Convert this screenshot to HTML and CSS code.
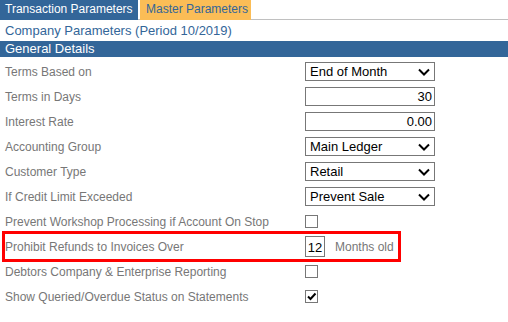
FILE: index.html
```html
<!DOCTYPE html>
<html lang="en">
<head>
    <meta charset="UTF-8">
    <title>Company Parameters</title>
    <link rel="stylesheet" href="styles.css">
</head>
<body>

<div class="tabs">
    <div class="tab">Transaction Parameters</div>
    <div class="tab active">Master Parameters</div>
</div>

<div class="title">Company Parameters (Period 10/2019)</div>
<div class="section">General Details</div>

<div class="form">
    <div class="row">
        <div class="label">Terms Based on</div>
        <div class="select">End of Month
            <svg class="chev" width="12" height="8" viewBox="0 0 12 8"><path d="M1 1.5 L6 6.5 L11 1.5" fill="none" stroke="#000" stroke-width="2"/></svg>
        </div>
    </div>
    <div class="row">
        <div class="label">Terms in Days</div>
        <div class="input">30</div>
    </div>
    <div class="row">
        <div class="label">Interest Rate</div>
        <div class="input">0.00</div>
    </div>
    <div class="row">
        <div class="label">Accounting Group</div>
        <div class="select">Main Ledger
            <svg class="chev" width="12" height="8" viewBox="0 0 12 8"><path d="M1 1.5 L6 6.5 L11 1.5" fill="none" stroke="#000" stroke-width="2"/></svg>
        </div>
    </div>
    <div class="row">
        <div class="label">Customer Type</div>
        <div class="select">Retail
            <svg class="chev" width="12" height="8" viewBox="0 0 12 8"><path d="M1 1.5 L6 6.5 L11 1.5" fill="none" stroke="#000" stroke-width="2"/></svg>
        </div>
    </div>
    <div class="row">
        <div class="label">If Credit Limit Exceeded</div>
        <div class="select">Prevent Sale
            <svg class="chev" width="12" height="8" viewBox="0 0 12 8"><path d="M1 1.5 L6 6.5 L11 1.5" fill="none" stroke="#000" stroke-width="2"/></svg>
        </div>
    </div>
    <div class="row">
        <div class="label">Prevent Workshop Processing if Account On Stop</div>
        <div class="check"></div>
    </div>
    <div class="row highlight">
        <div class="label">Prohibit Refunds to Invoices Over</div>
        <div class="small-input">12</div>
        <div class="unit">Months old</div>
    </div>
    <div class="row">
        <div class="label">Debtors Company &amp; Enterprise Reporting</div>
        <div class="check"></div>
    </div>
    <div class="row">
        <div class="label">Show Queried/Overdue Status on Statements</div>
        <div class="check">
            <svg width="11" height="11" viewBox="0 0 11 11"><path d="M2 5.5 L4.5 8 L9.5 2.5" fill="none" stroke="#000" stroke-width="2"/></svg>
        </div>
    </div>
</div>

</body>
</html>
```

FILE: styles.css
```css
body {
    font-family: "Liberation Sans", Arial, sans-serif;
    font-size: 12px;
    background-color: #fff;
    margin: 0;
    padding: 0;
}
.tabs {
    display: flex;
    height: 19px;
    border-bottom: 1px solid #c0c0c0;
}
.tab {
    background-color: #336699;
    color: #fff;
    height: 20px;
    line-height: 19px;
    padding: 0 5px;
    width: 138px;
    box-sizing: border-box;
    white-space: nowrap;
    margin-right: 2px;
}
.tab.active {
    background-color: #fbbd56;
    color: #336699;
    width: 111px;
    padding: 0 6px;
}
.title {
    color: #336699;
    font-size: 13px;
    line-height: 21px;
    padding-left: 5px;
}
.section {
    background-color: #336699;
    color: #fff;
    font-size: 13px;
    line-height: 16px;
    padding-left: 5px;
    margin-bottom: 2px;
}
.row {
    display: flex;
    align-items: center;
    height: 25px;
}
.label {
    width: 305px;
    padding-left: 5px;
    box-sizing: border-box;
    color: #777;
}
.select, .input {
    position: relative;
    width: 130px;
    height: 19px;
    line-height: 17px;
    border: 1px solid #777;
    box-sizing: border-box;
    padding: 0 4px;
    color: #000;
    font-size: 13px;
}
.input {
    text-align: right;
    padding-right: 2px;
}
.chev {
    position: absolute;
    right: 4px;
    top: 5px;
}
.check {
    width: 13px;
    height: 13px;
    border: 1px solid #777;
    box-sizing: border-box;
    display: flex;
    align-items: center;
    justify-content: center;
}
.highlight {
    margin-left: 5px;
    width: 393px;
    outline: 3px solid #f00;
}
.highlight .label {
    width: 300px;
    padding-left: 0;
}
.small-input {
    width: 20px;
    height: 21px;
    line-height: 21px;
    border: 1px solid #777;
    box-sizing: border-box;
    text-align: center;
    font-size: 13px;
    color: #000;
}
.unit {
    color: #777;
    margin-left: 10px;
}
```
